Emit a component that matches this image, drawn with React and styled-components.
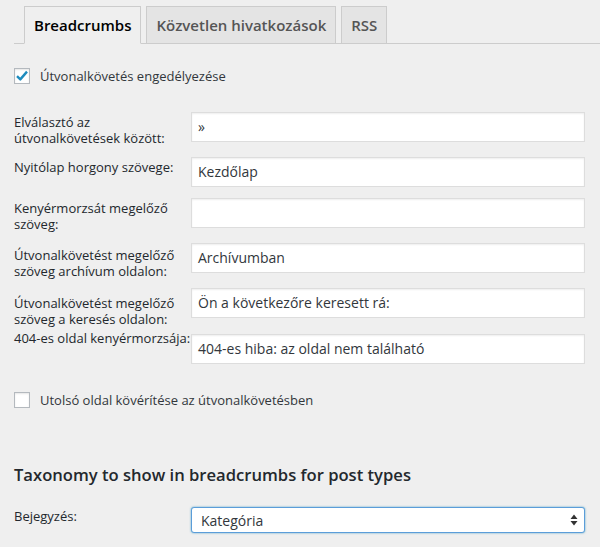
import React from 'react';
import styled, { createGlobalStyle } from 'styled-components';

const Global = createGlobalStyle`
    body {
        margin: 0;
        background: #efefef;
        font-family: "Open Sans", "Liberation Sans", sans-serif;
        font-size: 13px;
        color: #23282d;
    }
`;

const Page = styled.div`
    width: 600px;
    height: 547px;
    overflow: hidden;
`;

const TabBar = styled.nav`
    display: flex;
    gap: 5px;
    margin-left: 14px;
    padding: 6px 0 0 10px;
    border-bottom: 1px solid #cccccc;
`;

const Tab = styled.a`
    display: block;
    padding: 0 9px;
    height: 36px;
    line-height: 36px;
    font-size: 15px;
    font-weight: 600;
    border: 1px solid #cccccc;
    margin-bottom: -1px;
    background: ${p => (p.$active ? '#efefef' : '#e4e4e4')};
    border-bottom-color: ${p => (p.$active ? '#efefef' : '#cccccc')};
    color: ${p => (p.$active ? '#000' : '#555')};
`;

const Form = styled.div`
    padding: 24px 15px 0 14px;
`;

const CheckRow = styled.label`
    display: flex;
    align-items: center;
    gap: 10px;
    height: 16px;
    font-size: 13px;
    color: #32373c;
    margin-bottom: ${p => p.$mb || 0}px;
`;

const Box = styled.span`
    width: 16px;
    height: 16px;
    box-sizing: border-box;
    border: 1px solid #b4b9be;
    background: #fff;
    box-shadow: inset 0 1px 2px rgba(0, 0, 0, 0.1);
    display: flex;
    align-items: center;
    justify-content: center;
`;

const Field = styled.div`
    display: flex;
    align-items: flex-start;
    height: ${p => p.$h || 30}px;
    margin-bottom: ${p => (p.$mb !== undefined ? p.$mb : 15)}px;
`;

const Label = styled.label`
    width: 177px;
    flex: none;
    margin-top: ${p => (p.$mt !== undefined ? p.$mt : 2)}px;
    line-height: 16px;
    font-size: 13px;
    color: #23282d;
`;

const Input = styled.div`
    flex: 1;
    height: 30px;
    box-sizing: border-box;
    border: 1px solid #dddddd;
    background: #fff;
    box-shadow: inset 0 1px 2px rgba(0, 0, 0, 0.07);
    padding: 0 6px;
    font-size: 14px;
    line-height: 28px;
    color: #32373c;
`;

const Heading = styled.h2`
    margin: 56px 0 21px;
    font-size: 16.6px;
    line-height: 22px;
    font-weight: 600;
    color: #23282d;
`;

const Select = styled.div`
    flex: 1;
    height: 26px;
    box-sizing: border-box;
    border: 1px solid #5b9dd9;
    border-radius: 3px;
    box-shadow: 0 0 2px rgba(30, 140, 190, 0.8);
    background: #fff;
    display: flex;
    align-items: center;
    justify-content: space-between;
    padding: 0 6px 0 9px;
    font-size: 14px;
    color: #32373c;
`;

function Check() {
    return (
        <svg width="14" height="14" viewBox="0 0 14 14">
            <path d="M2 7.2 L5.3 10.4 L12 2.6" fill="none" stroke="#1e8cbe" strokeWidth="2.4" strokeLinejoin="round" />
        </svg>
    );
}

function Arrows() {
    return (
        <svg width="8" height="12" viewBox="0 0 8 12">
            <path d="M4 0.5 L7.5 5 L0.5 5 Z M0.5 7 L7.5 7 L4 11.5 Z" fill="#333" />
        </svg>
    );
}

const fields = [
    { label: 'Elválasztó az útvonalkövetések között:', value: '»' },
    { label: 'Nyitólap horgony szövege:', value: 'Kezdőlap', mb: 11 },
    { label: 'Kenyérmorzsát megelőző szöveg:', value: '' },
    { label: 'Útvonalkövetést megelőző szöveg archívum oldalon:', value: 'Archívumban', mt: 4 },
    { label: 'Útvonalkövetést megelőző szöveg a keresés oldalon:', value: 'Ön a következőre keresett rá:', mt: 7, mb: 16 },
    { label: '404-es oldal kenyérmorzsája:', value: '404-es hiba: az oldal nem található', mt: -4, mb: 28 },
];

export default function App() {
    return (
        <Page>
            <Global />
            <TabBar>
                <Tab $active>Breadcrumbs</Tab>
                <Tab>Közvetlen hivatkozások</Tab>
                <Tab>RSS</Tab>
            </TabBar>
            <Form>
                <CheckRow $mb={28}>
                    <Box><Check /></Box>
                    Útvonalkövetés engedélyezése
                </CheckRow>
                {fields.map(f => (
                    <Field key={f.label} $mb={f.mb}>
                        <Label $mt={f.mt}>{f.label}</Label>
                        <Input>{f.value}</Input>
                    </Field>
                ))}
                <CheckRow>
                    <Box />
                    Utolsó oldal kövérítése az útvonalkövetésben
                </CheckRow>
                <Heading>Taxonomy to show in breadcrumbs for post types</Heading>
                <Field $h={26} $mb={0}>
                    <Label $mt={1}>Bejegyzés:</Label>
                    <Select>
                        Kategória
                        <Arrows />
                    </Select>
                </Field>
            </Form>
        </Page>
    );
}
